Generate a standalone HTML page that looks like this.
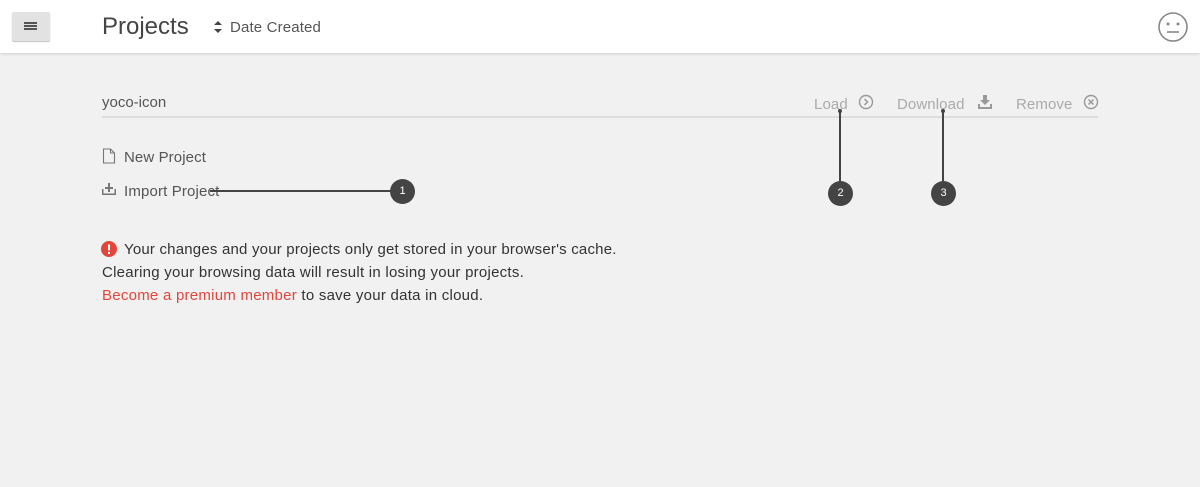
<!DOCTYPE html>
<html><head><style>
body{margin:0;width:1200px;height:487px;background:#f1f1f1;font-family:"Liberation Sans",sans-serif;position:relative;overflow:hidden;color:#444}
.hdr{position:absolute;left:0;top:0;width:1200px;height:53px;background:#fff;box-shadow:0 1px 3px rgba(0,0,0,.15)}
.a{position:absolute;white-space:nowrap}
.hb{position:absolute;left:12px;width:13px;height:2px;background:#555}
</style></head><body>
<div class="hdr"></div>
<div class="a" style="left:12px;top:12px;width:38px;height:29px;background:#e2e2e2;border-radius:2px;box-shadow:0 1px 1px rgba(0,0,0,.25)">
<div class="hb" style="top:10px"></div><div class="hb" style="top:13px"></div><div class="hb" style="top:16px"></div></div>
<div class="a" style="left:102px;top:13px;font-size:24px;color:#444">Projects</div>
<svg class="a" style="left:213px;top:20px" width="10" height="14"><path d="M1 5L5 1L9 5ZM1 9L5 13L9 9Z" fill="#444"/></svg>
<div class="a" style="left:230px;top:19px;font-size:15px;color:#555;letter-spacing:0.15px">Date Created</div>
<svg class="a" style="left:1157px;top:11px" width="32" height="32"><circle cx="16" cy="16" r="14" fill="none" stroke="#888" stroke-width="1.6"/><circle cx="11" cy="13" r="1.5" fill="#888"/><circle cx="21" cy="13" r="1.5" fill="#888"/><line x1="10" y1="21" x2="22" y2="21" stroke="#888" stroke-width="1.6"/></svg>

<div class="a" style="left:102px;top:94px;font-size:15px;color:#555">yoco-icon</div>
<div class="a" style="left:102px;top:116px;width:996px;height:2px;background:#ddd"></div>
<div class="a" style="left:814px;top:96px;font-size:15px;color:#aaa;letter-spacing:0.1px">Load</div>
<svg class="a" style="left:858px;top:94px" width="16" height="16"><circle cx="8" cy="8" r="6.5" fill="none" stroke="#999" stroke-width="1.4"/><path d="M6.5 5L9.5 8L6.5 11" fill="none" stroke="#999" stroke-width="1.5"/></svg>
<div class="a" style="left:897px;top:96px;font-size:15px;color:#aaa;letter-spacing:0.1px">Download</div>
<svg class="a" style="left:977px;top:94px" width="16" height="16"><path d="M6 1h4v5h3l-5 5-5-5h3z" fill="#999"/><path d="M1 10v5h14v-5h-2v3H3v-3z" fill="#999"/></svg>
<div class="a" style="left:1016px;top:96px;font-size:15px;color:#aaa;letter-spacing:0.1px">Remove</div>
<svg class="a" style="left:1083px;top:94px" width="16" height="16"><circle cx="8" cy="8" r="6.5" fill="none" stroke="#999" stroke-width="1.4"/><path d="M5.5 5.5l5 5M10.5 5.5l-5 5" stroke="#999" stroke-width="1.5"/></svg>

<svg class="a" style="left:102px;top:148px" width="14" height="16"><path d="M1.5 1h7l4 4v10h-11z M8.5 1v4h4" fill="none" stroke="#777" stroke-width="1.1"/></svg>
<div class="a" style="left:124px;top:149px;font-size:15px;color:#555;letter-spacing:0.1px">New Project</div>
<svg class="a" style="left:101px;top:182px" width="16" height="14"><path d="M7 1h2v4h3v2H9v3H7V7H4V5h3z" fill="#777"/><path d="M1 7v6h14V7h-1.5v4.5h-11V7z" fill="#777"/></svg>
<div class="a" style="left:124px;top:183px;font-size:15px;color:#555;letter-spacing:0.15px">Import Project</div>

<div class="a" style="left:210px;top:190px;width:182px;height:2px;background:#444"></div>
<div class="a" style="left:390px;top:179px;width:25px;height:25px;border-radius:50%;background:#444;color:#fff;font-size:11px;text-align:center;line-height:25px">1</div>
<div class="a" style="left:839px;top:110px;width:2px;height:72px;background:#444"></div>
<div class="a" style="left:838px;top:109px;width:4px;height:4px;border-radius:50%;background:#444"></div>
<div class="a" style="left:828px;top:181px;width:25px;height:25px;border-radius:50%;background:#444;color:#fff;font-size:11px;text-align:center;line-height:25px">2</div>
<div class="a" style="left:942px;top:110px;width:2px;height:72px;background:#444"></div>
<div class="a" style="left:941px;top:109px;width:4px;height:4px;border-radius:50%;background:#444"></div>
<div class="a" style="left:931px;top:181px;width:25px;height:25px;border-radius:50%;background:#444;color:#fff;font-size:11px;text-align:center;line-height:25px">3</div>

<svg class="a" style="left:101px;top:241px" width="16" height="16"><circle cx="8" cy="8" r="8" fill="#e4453a"/><rect x="7" y="3.5" width="2" height="6" fill="#fff"/><rect x="7" y="11" width="2" height="2" fill="#fff"/></svg>
<div class="a" style="left:124px;top:241px;font-size:15px;color:#333;letter-spacing:0.2px">Your changes and your projects only get stored in your browser's cache.</div>
<div class="a" style="left:102px;top:264px;font-size:15px;color:#333;letter-spacing:0.25px">Clearing your browsing data will result in losing your projects.</div>
<div class="a" style="left:102px;top:287px;font-size:15px;color:#333;letter-spacing:0.25px"><span style="color:#e4453a">Become a premium member</span> to save your data in cloud.</div>
</body></html>
